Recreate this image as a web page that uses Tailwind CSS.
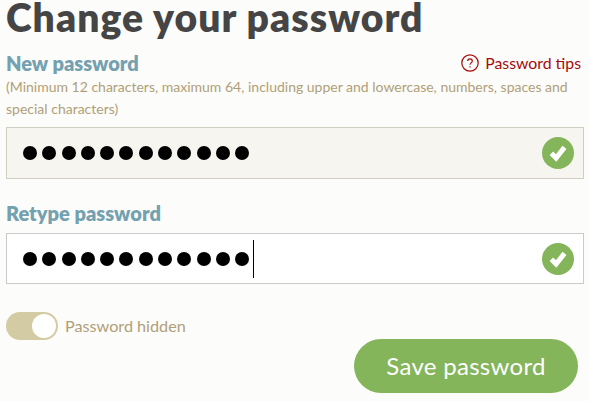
<!DOCTYPE html>
<html lang="en">

<head>
    <meta charset="UTF-8">
    <title>Change your password</title>
    <script src="https://cdn.jsdelivr.net/npm/@tailwindcss/browser@4"></script>
</head>

<body class="bg-[#fcfcfa] overflow-hidden font-['Lato',sans-serif]">
    <div class="w-[589px] h-[401px] pl-[6px] pr-[5px]">
        <h1 class="text-[39px] leading-[34px] font-extrabold text-[#454545] tracking-[1.05px]">Change your password</h1>

        <div class="flex justify-between items-center mt-[16px] h-[26px]">
            <label class="text-[20px] font-extrabold text-[#74a1b0]">New password</label>
            <a class="flex items-center gap-[6px] mr-[3px] text-[15.8px] text-[#a70a0a]">
                <svg class="w-[18px] h-[18px]" viewBox="0 0 18 18" fill="none" stroke="#a70a0a" stroke-width="1.2">
                    <circle cx="9" cy="9" r="8.2" />
                    <path d="M6.7 7.1c0-1.3 1-2.2 2.3-2.2s2.3.9 2.3 2.1c0 1.9-2.3 1.9-2.3 3.8" />
                    <path d="M9 12.2v1.4" />
                </svg>
                Password tips
            </a>
        </div>
        <p class="text-[14px] leading-[22px] text-[#b0a079]">(Minimum 12 characters, maximum 64, including upper and lowercase, numbers, spaces and special characters)</p>

        <div class="flex items-center justify-between mt-[7px] h-[52px] border border-[#d1cfc4] bg-[#f6f5f0] pl-[16px] pr-[9px]">
            <div class="flex gap-[5.3px]">
                <span class="w-[14px] h-[14px] rounded-full bg-black"></span><span class="w-[14px] h-[14px] rounded-full bg-black"></span><span class="w-[14px] h-[14px] rounded-full bg-black"></span><span class="w-[14px] h-[14px] rounded-full bg-black"></span><span class="w-[14px] h-[14px] rounded-full bg-black"></span><span class="w-[14px] h-[14px] rounded-full bg-black"></span><span class="w-[14px] h-[14px] rounded-full bg-black"></span><span class="w-[14px] h-[14px] rounded-full bg-black"></span><span class="w-[14px] h-[14px] rounded-full bg-black"></span><span class="w-[14px] h-[14px] rounded-full bg-black"></span><span class="w-[14px] h-[14px] rounded-full bg-black"></span><span class="w-[14px] h-[14px] rounded-full bg-black"></span>
            </div>
            <svg class="w-[32px] h-[32px]" viewBox="0 0 32 32">
                <circle cx="16" cy="16" r="16" fill="#84b55a" />
                <path d="M9.4 16.2l4.7 4.8 8.4-10.6" fill="none" stroke="#fff" stroke-width="5" />
            </svg>
        </div>

        <label class="block mt-[22px] h-[28px] text-[20px] leading-[24px] font-extrabold text-[#74a1b0]">Retype password</label>
        <div class="flex items-center justify-between mt-[4px] h-[51px] border border-[#cacaca] bg-white pl-[16px] pr-[9px]">
            <div class="flex items-center gap-[5.3px]">
                <span class="w-[14px] h-[14px] rounded-full bg-black"></span><span class="w-[14px] h-[14px] rounded-full bg-black"></span><span class="w-[14px] h-[14px] rounded-full bg-black"></span><span class="w-[14px] h-[14px] rounded-full bg-black"></span><span class="w-[14px] h-[14px] rounded-full bg-black"></span><span class="w-[14px] h-[14px] rounded-full bg-black"></span><span class="w-[14px] h-[14px] rounded-full bg-black"></span><span class="w-[14px] h-[14px] rounded-full bg-black"></span><span class="w-[14px] h-[14px] rounded-full bg-black"></span><span class="w-[14px] h-[14px] rounded-full bg-black"></span><span class="w-[14px] h-[14px] rounded-full bg-black"></span><span class="w-[14px] h-[14px] rounded-full bg-black"></span>
                <span class="w-px h-[38px] bg-black -ml-[2px]"></span>
            </div>
            <svg class="w-[32px] h-[32px]" viewBox="0 0 32 32">
                <circle cx="16" cy="16" r="16" fill="#84b55a" />
                <path d="M9.4 16.2l4.7 4.8 8.4-10.6" fill="none" stroke="#fff" stroke-width="5" />
            </svg>
        </div>

        <div class="flex items-center gap-[7px] mt-[28px]">
            <div class="flex justify-end w-[52px] h-[28px] rounded-full bg-[#d3cba3] p-[2px]">
                <span class="w-[24px] h-[24px] rounded-full bg-white"></span>
            </div>
            <span class="text-[16.2px] text-[#b0a079]">Password hidden</span>
        </div>

        <div class="flex justify-end -mt-[1px] pr-[6px]">
            <button class="w-[224px] h-[54px] rounded-full bg-[#84b55a] text-white text-[24px] tracking-[0.3px]">Save password</button>
        </div>
    </div>
</body>

</html>
